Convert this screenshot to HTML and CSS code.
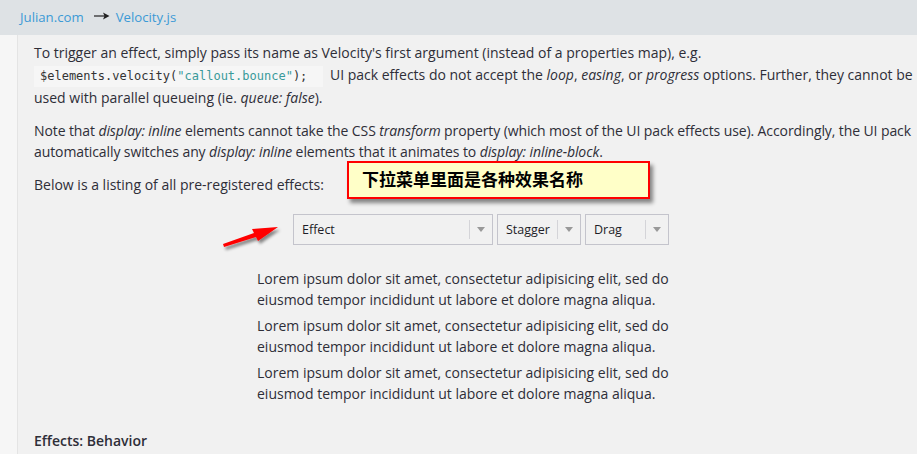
FILE: index.html
```html
<!DOCTYPE html>
<html>
<head>
<meta charset="utf-8">
<link rel="stylesheet" href="styles.css">
</head>
<body>
<header class="topbar">
  <a class="crumb">Julian.com</a>
  <svg class="sep" width="16" height="8" viewBox="0 0 16 8"><path d="M0 4 H11" stroke="#222" stroke-width="1.2"/><path d="M9 0.5 L15.5 4 L9 7.5 L10.5 4 Z" fill="#222"/></svg>
  <a class="crumb">Velocity.js</a>
</header>
<div class="page">
  <div class="rail"></div>
  <main class="content">
    <p>To trigger an effect, simply pass its name as Velocity's first argument (instead of a properties map), e.g.<br><code class="code">$elements.velocity(<span class="str">"callout.bounce"</span>);</code> UI pack effects do not accept the <em>loop</em>, <em>easing</em>, or <em>progress</em> options. Further, they cannot be used with parallel queueing (ie. <em>queue: false</em>).</p>
    <p class="tight">Note that <em>display: inline</em> elements cannot take the CSS <em>transform</em> property (which most of the UI pack effects use). Accordingly, the UI pack automatically switches any <em>display: inline</em> elements that it animates to <em>display: inline-block</em>.</p>
    <p class="below">Below is a listing of all pre-registered effects:</p>
    <div class="demo">
      <div class="selects">
        <div class="select s-effect"><span class="label">Effect</span><span class="div"></span><span class="caret"></span></div>
        <div class="select s-small"><span class="label">Stagger</span><span class="div"></span><span class="caret"></span></div>
        <div class="select s-small"><span class="label">Drag</span><span class="div"></span><span class="caret"></span></div>
      </div>
      <p class="lorem">Lorem ipsum dolor sit amet, consectetur adipisicing elit, sed do eiusmod tempor incididunt ut labore et dolore magna aliqua.</p>
      <p class="lorem">Lorem ipsum dolor sit amet, consectetur adipisicing elit, sed do eiusmod tempor incididunt ut labore et dolore magna aliqua.</p>
      <p class="lorem">Lorem ipsum dolor sit amet, consectetur adipisicing elit, sed do eiusmod tempor incididunt ut labore et dolore magna aliqua.</p>
    </div>
    <h4 class="section">Effects: Behavior</h4>
  </main>
  <div class="note">下拉菜单里面是各种效果名称</div>
  <svg class="arrow" width="70" height="36" viewBox="0 0 70 36">
    <defs>
      <filter id="sh" x="-20%" y="-20%" width="160%" height="180%">
        <feDropShadow dx="2" dy="3" stdDeviation="1.5" flood-color="#000" flood-opacity="0.45"/>
      </filter>
    </defs>
    <g filter="url(#sh)">
      <path d="M4 28 L36 18 L38 22 L58 8 L32 10 L34 14 L3 25 Z" fill="#f00"/>
    </g>
  </svg>
</div>
</body>
</html>
```

FILE: styles.css
```css
html, body {
  margin: 0;
  padding: 0;
}
body {
  width: 917px;
  height: 454px;
  overflow: hidden;
  background: #f1f1f1;
  font-family: "Open Sans", "Liberation Sans", sans-serif;
  color: #2e2e38;
  font-size: 14px;
}
.topbar {
  height: 35px;
  background: #dee2e5;
  display: flex;
  align-items: center;
  padding-left: 20px;
  padding-bottom: 1px;
  box-sizing: border-box;
  font-size: 13.2px;
}
.crumb {
  color: #3c9ad6;
}
.sep {
  margin: 0 6px 2px 10px;
}
.page {
  position: relative;
  display: flex;
  height: 419px;
}
.rail {
  width: 17px;
  flex: none;
  background: #f6f6f6;
  border-right: 1px solid #e4e4e4;
}
.content {
  flex: 1;
  padding: 7px 0 0 16px;
  line-height: 21.5px;
}
.content p {
  margin: 0 0 11px 0;
}
.content p.tight {
  letter-spacing: -0.1px;
}
em {
  font-style: italic;
}
.code {
  display: inline-block;
  font-family: "DejaVu Sans Mono", "Liberation Mono", monospace;
  font-size: 12px;
  background: #f6f6f6;
  padding: 0 16px 0 6px;
  margin-right: 3px;
  color: #333;
  letter-spacing: 0;
}
.str {
  color: #3a9a9a;
}
.content p.below {
  margin-bottom: 19px;
}
.demo {
  margin-left: 223px;
  width: 430px;
}
.selects {
  display: flex;
  gap: 4px;
  margin-left: 36px;
  margin-bottom: 23px;
}
.select {
  flex: none;
  height: 31px;
  box-sizing: border-box;
  border: 1px solid #c4c4cc;
  display: flex;
  align-items: center;
  font-size: 12.5px;
  color: #1e1e28;
  padding-left: 8px;
}
.s-effect {
  width: 200px;
}
.s-small {
  width: 84px;
}
.label {
  flex: 1;
}
.div {
  width: 1px;
  height: 19px;
  background: #d4d4d8;
}
.caret {
  width: 0;
  height: 0;
  border-left: 4px solid transparent;
  border-right: 4px solid transparent;
  border-top: 5px solid #999;
  margin: 0 7px 0 7px;
}
.content p.lorem {
  margin: 0 0 5px 0;
  line-height: 21px;
}
.section {
  margin: 26px 0 0 0;
  font-size: 14px;
  font-weight: 600;
}
.note {
  position: absolute;
  left: 347px;
  top: 126px;
  width: 303px;
  height: 38px;
  box-sizing: border-box;
  border: 2px solid #f00;
  background: #ffffc8;
  box-shadow: 3px 4px 4px rgba(0,0,0,0.45);
  font-family: "Noto Sans CJK SC", sans-serif;
  font-weight: 700;
  font-size: 17px;
  line-height: 32px;
  padding-left: 13px;
  color: #000;
}
.arrow {
  position: absolute;
  left: 220px;
  top: 184px;
}
```
